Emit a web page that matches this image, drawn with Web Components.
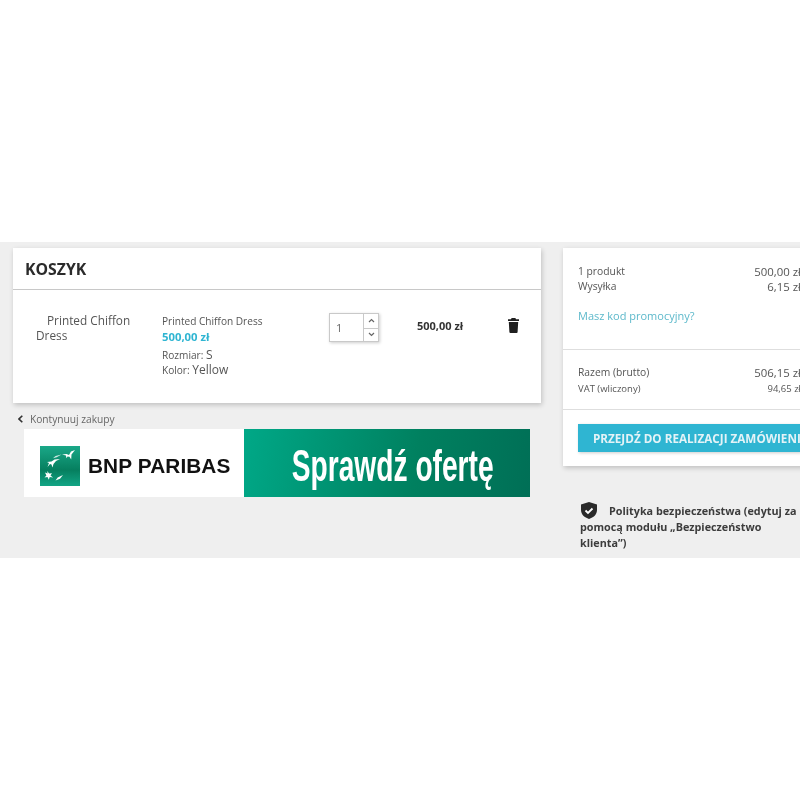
<!DOCTYPE html>
<html lang="pl">
<head>
<meta charset="utf-8">
<title>Koszyk</title>
<style>
    html, body { margin: 0; background: #fff; }
    body { font-family: "Open Sans", sans-serif; color: #4a4a4a; }
</style>
</head>
<body>
<cart-page></cart-page>
<script>
class QtyInput extends HTMLElement {
    constructor() {
        super();
        this.shadowDOM = this.attachShadow({mode: 'open'});
    }

    connectedCallback() {
        this.shadowDOM.innerHTML = `
        <style>
            :host {
                display: flex;
                width: 50px;
                height: 29px;
                box-sizing: border-box;
                border: 1px solid #c9c9c9;
                box-shadow: 1px 1px 3px rgba(0,0,0,.2);
                background: #fff;
            }
            .value {
                width: 34px;
                box-sizing: border-box;
                padding: 0 0 0 6px;
                font-size: 11px;
                line-height: 27px;
                color: #666;
                border-right: 1px solid #c9c9c9;
            }
            .arrows { flex: 1; display: grid; grid-template-rows: 1fr 1fr; }
            .arrows div { display: flex; align-items: center; justify-content: center; }
            .arrows div + div { border-top: 1px solid #c9c9c9; }
            svg { width: 7px; height: 5px; fill: none; stroke: #666; stroke-width: 1.2; }
        </style>
        <div class="value">${this.getAttribute('value')}</div>
        <div class="arrows">
            <div><svg viewBox="0 0 7 5"><path d="M1 4l2.500-2.500L6 4"/></svg></div>
            <div><svg viewBox="0 0 7 5"><path d="M1 1l2.500 2.500L6 1"/></svg></div>
        </div>
        `;
    }
}

class CartItem extends HTMLElement {
    constructor() {
        super();
        this.shadowDOM = this.attachShadow({mode: 'open'});
    }

    connectedCallback() {
        this.shadowDOM.innerHTML = `
        <style>
            :host {
                display: grid;
                grid-template-columns: 126px 167px 88px 91px 11px;
                padding: 23px 0 0 23px;
                height: 113px;
                box-sizing: border-box;
            }
            .alt {
                font-size: 11.800px;
                line-height: 15px;
                width: 105px;
                text-indent: 11px;
                color: #555;
            }
            .info { font-size: 10.100px; line-height: 15px; color: #555; padding-top: 1px; }
            .price { color: #2fb5d2; font-size: 11.300px; font-weight: 700; }
            .attrs { margin-top: 4px; line-height: 15px; }
            .attrs b { font-weight: 400; font-size: 12px; line-height: 1; }
            .total { font-size: 11px; font-weight: 700; color: #333; padding-top: 5px; line-height: 16px; }
            svg { width: 11px; height: 15px; fill: #1f1f1f; margin-top: 5px; }
        </style>
        <div class="alt">Printed Chiffon Dress</div>
        <div class="info">
            Printed Chiffon Dress
            <div class="price">500,00 zł</div>
            <div class="attrs">Rozmiar: <b>S</b><br>Kolor: <b>Yellow</b></div>
        </div>
        <qty-input value="1"></qty-input>
        <div class="total">500,00 zł</div>
        <svg viewBox="0 0 11 15"><path d="M3.600 0h3.800l.6 1.200H11v1.700H0V1.200h3zM.8 4h9.400l-.6 10a1 1 0 0 1-1 1H2.400a1 1 0 0 1-1-1z"/></svg>
        `;
    }
}

class CartCard extends HTMLElement {
    constructor() {
        super();
        this.shadowDOM = this.attachShadow({mode: 'open'});
    }

    connectedCallback() {
        this.shadowDOM.innerHTML = `
        <style>
            :host {
                display: block;
                background: #fff;
                box-shadow: 1px 2px 5px rgba(0,0,0,.2);
            }
            h1 {
                margin: 0;
                height: 41px;
                padding-left: 12px;
                font-size: 15.800px;
                line-height: 43px;
                font-weight: 700;
                color: #2b2b2b;
                border-bottom: 1px solid #c8c8c8;
            }
        </style>
        <h1>KOSZYK</h1>
        <slot></slot>
        `;
    }
}

class BackLink extends HTMLElement {
    constructor() {
        super();
        this.shadowDOM = this.attachShadow({mode: 'open'});
    }

    connectedCallback() {
        this.shadowDOM.innerHTML = `
        <style>
            :host {
                display: flex;
                align-items: center;
                gap: 7px;
                height: 18px;
                padding-left: 5px;
                font-size: 10.200px;
                color: #666;
            }
            svg { width: 5px; height: 8px; fill: none; stroke: #333; stroke-width: 1.6; }
        </style>
        <svg viewBox="0 0 5 8"><path d="M4.300 .7L1 4l3.300 3.300"/></svg>
        <span><slot></slot></span>
        `;
    }
}

class PromoBanner extends HTMLElement {
    constructor() {
        super();
        this.shadowDOM = this.attachShadow({mode: 'open'});
    }

    connectedCallback() {
        this.shadowDOM.innerHTML = `
        <style>
            :host {
                display: grid;
                grid-template-columns: 220px 286px;
                height: 68px;
                margin-left: 11px;
            }
            .brand {
                background: #fff;
                display: flex;
                align-items: center;
                gap: 8px;
                padding: 6px 0 0 16px;
            }
            .brand svg { width: 40px; height: 40px; }
            .brand span {
                font-family: "Liberation Sans", sans-serif;
                font-weight: 700;
                font-size: 20.800px;
                letter-spacing: .1px;
                color: #111;
                white-space: nowrap;
            }
            .cta {
                background: linear-gradient(100deg, #00a887, #00805f 60%, #006f56);
                display: flex;
                align-items: center;
                justify-content: center;
                color: #fff;
                overflow: hidden;
            }
            .cta span {
                font-family: "Liberation Sans", sans-serif;
                font-size: 44px;
                font-weight: 700;
                display: inline-block;
                transform: scaleX(.64);
                white-space: nowrap;
                line-height: 60px;
                margin: 6px 0 0 12px;
            }
        </style>
        <div class="brand">
            <svg viewBox="0 0 40 40">
                <defs><linearGradient id="g" x1="0" y1="0" x2="0" y2="1">
                    <stop offset="0" stop-color="#1aa888"/><stop offset=".6" stop-color="#067f5f"/><stop offset="1" stop-color="#12a585"/>
                </linearGradient></defs>
                <rect width="40" height="40" fill="url(#g)"/>
                <g fill="#fff">
                    <path d="M35 4l-3.500 4.500-.3 5-1.700-2.700-2-.4-1 1.800-.6-2.600-3.900-1.100 4.500-.5 2.500 1 2-3.500z"/>
                    <path d="M20 13l-4 2-2.500 3-1 3.500-1-3-1.500-.5-2.500 3 1.500-4-2-1 4.500-.5 3-2z"/>
                    <path d="M7 25l2.200 2.600 2.800-.4-1.500 2.200 2.500 2-3.300-.4-.9 2.700-1.300-2.600-3 .4 1.900-2-1.400-3 2.700 1.100z"/>
                    <path d="M23 29l-3 3.800-4.500 1.700 2.200-3z"/>
                    <path d="M21.500 8.500l-6 1.500-2.500 2.200 3.700-1z" opacity=".8"/>
                </g>
            </svg>
            <span>BNP PARIBAS</span>
        </div>
        <div class="cta"><span>Sprawdź ofertę</span></div>
        `;
    }
}

class SummaryRow extends HTMLElement {
    constructor() {
        super();
        this.shadowDOM = this.attachShadow({mode: 'open'});
    }

    connectedCallback() {
        this.shadowDOM.innerHTML = `
        <style>
            :host {
                display: flex;
                justify-content: space-between;
                font-size: 10.300px;
                line-height: 15px;
                color: #555;
            }
            :host([small]) { font-size: 9.500px; padding-top: 1px; }
            .value { font-size: 11.400px; }
            :host([small]) .value { font-size: 9.500px; }
        </style>
        <span><slot></slot></span>
        <span class="value">${this.getAttribute('value')}</span>
        `;
    }
}

class OrderSummary extends HTMLElement {
    constructor() {
        super();
        this.shadowDOM = this.attachShadow({mode: 'open'});
    }

    connectedCallback() {
        this.shadowDOM.innerHTML = `
        <style>
            :host {
                display: block;
                width: 253px;
                height: 218px;
                background: #fff;
                box-shadow: 1px 2px 5px rgba(0,0,0,.2);
            }
            section { padding: 16px 15px 0; box-sizing: border-box; }
            .top { height: 102px; border-bottom: 1px solid #dedede; }
            .mid { height: 60px; border-bottom: 1px solid #dedede; padding-top: 15px; }
            .end { padding-top: 14px; }
            .promo {
                display: block;
                margin-top: 14px;
                font-size: 11px;
                line-height: 16px;
                color: #5db9cb;
            }
            .cta {
                height: 28px;
                background: #2fb5d2;
                box-shadow: 1px 1px 3px rgba(0,0,0,.2);
                color: #e4f3f7;
                font-size: 11.700px;
                font-weight: 700;
                line-height: 28px;
                padding-left: 15px;
                white-space: nowrap;
                overflow: hidden;
            }
        </style>
        <section class="top">
            <summary-row value="500,00 zł">1 produkt</summary-row>
            <summary-row value="6,15 zł">Wysyłka</summary-row>
            <span class="promo">Masz kod promocyjny?</span>
        </section>
        <section class="mid">
            <summary-row value="506,15 zł">Razem (brutto)</summary-row>
            <summary-row small value="94,65 zł">VAT (wliczony)</summary-row>
        </section>
        <section class="end">
            <div class="cta">PRZEJDŹ DO REALIZACJI ZAMÓWIENIA</div>
        </section>
        `;
    }
}

class SafetyNote extends HTMLElement {
    constructor() {
        super();
        this.shadowDOM = this.attachShadow({mode: 'open'});
    }

    connectedCallback() {
        this.shadowDOM.innerHTML = `
        <style>
            :host {
                display: block;
                margin: 36px 0 0 17px;
                width: 221px;
                font-size: 10.800px;
                font-weight: 700;
                line-height: 16px;
                color: #3c3c3c;
            }
            svg {
                width: 16px;
                height: 17px;
                margin: 0 12px -4px 1px;
            }
        </style>
        <svg viewBox="0 0 16 17"><path fill="#2a2a2a" d="M8 0l8 2.500V8c0 4.500-3.500 7.500-8 9-4.500-1.500-8-4.500-8-9V2.500z"/><path fill="none" stroke="#fff" stroke-width="1.800" d="M4.500 8.500l2.500 2.500 4.500-4.500"/></svg><slot></slot>
        `;
    }
}

class CartPage extends HTMLElement {
    constructor() {
        super();
        this.shadowDOM = this.attachShadow({mode: 'open'});
    }

    connectedCallback() {
        this.shadowDOM.innerHTML = `
        <style>
            :host {
                display: block;
                width: 800px;
                height: 800px;
                overflow: hidden;
                padding-top: 242px;
                box-sizing: border-box;
            }
            .band {
                display: flex;
                gap: 22px;
                height: 316px;
                box-sizing: border-box;
                padding: 6px 0 0 13px;
                background: #efefef;
                overflow: hidden;
                filter: blur(.35px);
            }
            .left { width: 528px; flex: none; }
            .right { flex: none; }
            back-link { margin-top: 7px; margin-bottom: 1px; }
        </style>
        <div class="band">
            <div class="left">
                <cart-card><cart-item></cart-item></cart-card>
                <back-link>Kontynuuj zakupy</back-link>
                <promo-banner></promo-banner>
            </div>
            <div class="right">
                <order-summary></order-summary>
                <safety-note>Polityka bezpieczeństwa (edytuj za pomocą modułu „Bezpieczeństwo klienta”)</safety-note>
            </div>
        </div>
        `;
    }
}

customElements.define('qty-input', QtyInput)
customElements.define('cart-item', CartItem)
customElements.define('cart-card', CartCard)
customElements.define('back-link', BackLink)
customElements.define('promo-banner', PromoBanner)
customElements.define('summary-row', SummaryRow)
customElements.define('order-summary', OrderSummary)
customElements.define('safety-note', SafetyNote)
customElements.define('cart-page', CartPage)
</script>
</body>
</html>
